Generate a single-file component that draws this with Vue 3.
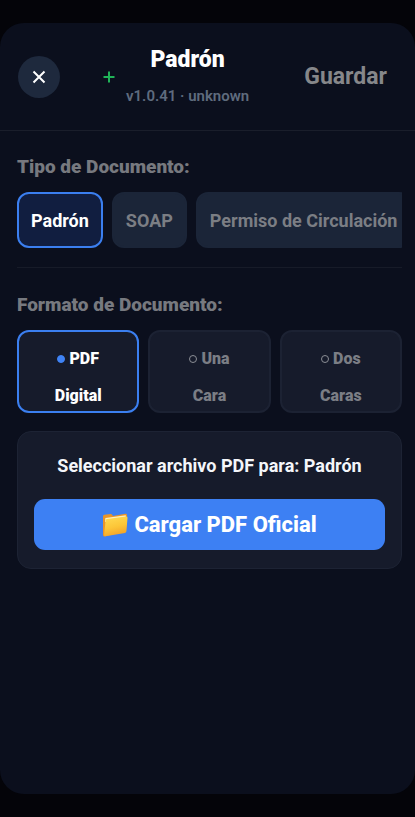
<template>
  <div class="backdrop">
    <main class="sheet">
      <header class="header">
        <button type="button" class="btn-close" aria-label="Cerrar">
          <svg viewBox="0 0 14 14" width="14" height="14" aria-hidden="true">
            <path d="M1.5 1.5L12.5 12.5M12.5 1.5L1.5 12.5" />
          </svg>
        </button>
        <div class="heading">
          <button type="button" class="btn-add" aria-label="Agregar">
            <svg viewBox="0 0 12 12" width="12" height="12" aria-hidden="true">
              <path d="M6 0.5V11.5M0.5 6H11.5" />
            </svg>
          </button>
          <div class="heading-text">
            <h1>{{ selectedType }}</h1>
            <p>v1.0.41 · unknown</p>
          </div>
        </div>
        <button type="button" class="btn-save">Guardar</button>
      </header>

      <section class="section types">
        <h2>Tipo de Documento:</h2>
        <div class="type-list">
          <button
            v-for="type in types"
            :key="type"
            type="button"
            class="type-item"
            :class="{ active: type === selectedType }"
            @click="selectedType = type"
          >
            {{ type }}
          </button>
        </div>
      </section>

      <section class="section">
        <h2 id="format-title">Formato de Documento:</h2>
        <div class="format-list" role="radiogroup" aria-labelledby="format-title">
          <label
            v-for="format in formats"
            :key="format.id"
            :for="'format-' + format.id"
            class="format-item"
            :class="{ active: format.id === selectedFormat }"
          >
            <span class="format-line">
              <input
                type="radio"
                :id="'format-' + format.id"
                name="format"
                :value="format.id"
                v-model="selectedFormat"
              />
              {{ format.first }}
            </span>
            <span class="format-line">{{ format.second }}</span>
          </label>
        </div>

        <div class="upload">
          <p>Seleccionar archivo PDF para: {{ selectedType }}</p>
          <button type="button" class="btn-upload">
            <svg viewBox="0 0 26 24" width="26" height="24" aria-hidden="true">
              <defs>
                <linearGradient id="folder-front" x1="0" y1="0" x2="0.3" y2="1">
                  <stop offset="0" stop-color="#ffdc55" />
                  <stop offset="0.6" stop-color="#fcc638" />
                  <stop offset="1" stop-color="#f4a62a" />
                </linearGradient>
              </defs>
              <path
                d="M1 3.2Q1 1.8 2.4 1.7L8.6 1Q9.6 0.9 10.1 1.7L11 3L23.4 0.8Q25 0.6 25 2.2L24 18L2.6 23.4Q1 23.6 1 22Z"
                fill="#e9952b"
              />
              <path d="M3.4 5L23.8 2.2V7L3 9Z" fill="#fff0bd" />
              <path
                d="M3.6 7.4Q3.7 6.2 5 6L24 3.6Q25.7 3.4 25.5 5L24.4 18.2Q24.3 19.6 23 19.9L3.4 23.2Q1.9 23.4 2.1 21.8Z"
                fill="url(#folder-front)"
              />
            </svg>
            <span>Cargar PDF Oficial</span>
          </button>
        </div>
      </section>
    </main>
  </div>
</template>

<script setup>
import { ref } from "vue";

const types = ["Padrón", "SOAP", "Permiso de Circulación"];
const selectedType = ref("Padrón");

const formats = [
  { id: "digital", first: "PDF", second: "Digital" },
  { id: "single", first: "Una", second: "Cara" },
  { id: "double", first: "Dos", second: "Caras" },
];
const selectedFormat = ref("digital");
</script>

<style>
body {
  background-color: #040409;
}
</style>

<style scoped>
.backdrop {
  box-sizing: border-box;
  min-height: 100vh;
  padding: 23px 0;
  display: flex;
  background-color: #040409;
  color: #fff;
  font-family: Roboto, "Liberation Sans", sans-serif;
}

.sheet {
  flex: 1;
  min-width: 0;
  border-radius: 24px;
  background-color: #0b0f1d;
}

button {
  padding: 0;
  border: none;
  background: none;
  color: inherit;
  font-family: inherit;
  font-weight: 700;
  cursor: pointer;
}

h1,
h2,
p {
  margin: 0;
}

svg {
  display: block;
  flex-shrink: 0;
}

.header {
  display: flex;
  align-items: center;
  justify-content: space-between;
  height: 107px;
  padding: 0 16px 0 18px;
  border-bottom: 1px solid #1a1e2b;
}

.btn-close {
  display: flex;
  align-items: center;
  justify-content: center;
  width: 42px;
  height: 42px;
  border-radius: 50%;
  background-color: #1e293d;
}

.btn-close path {
  fill: none;
  stroke: #fff;
  stroke-width: 2;
}

.heading {
  display: flex;
  align-items: center;
  gap: 11px;
}

.btn-add path {
  fill: none;
  stroke: #20b358;
  stroke-width: 2;
}

.heading-text {
  padding-bottom: 4px;
  text-align: center;
}

.heading-text h1 {
  font-size: 23px;
  line-height: 32px;
  font-weight: 900;
  margin-bottom: 10px;
}

.heading-text p {
  color: #5f6b7e;
  font-size: 15px;
  line-height: 20px;
  font-weight: 600;
}

.btn-save {
  padding: 0 12px;
  color: #86878a;
  font-size: 23px;
  line-height: 32px;
}

.section {
  margin: 0 13px 0 17px;
  padding-top: 22px;
}

.section h2 {
  color: #77797f;
  font-size: 19px;
  line-height: 28px;
  font-weight: 900;
  margin-bottom: 11px;
}

.types {
  padding-bottom: 19px;
  border-bottom: 1px solid #171b28;
}

.types + .section {
  padding-top: 23px;
}

.type-list {
  display: flex;
  gap: 9px;
  overflow: hidden;
}

.type-item {
  box-sizing: border-box;
  flex-shrink: 0;
  height: 56px;
  padding: 0 12px;
  border: 2px solid #1b2538;
  border-radius: 12px;
  background-color: #1b2538;
  color: #7b7e84;
  font-size: 18px;
  white-space: nowrap;
}

.type-item.active {
  border-color: #3b7ff0;
  background-color: #111e40;
  color: #fff;
}

.format-list {
  display: grid;
  grid-template-columns: repeat(3, 1fr);
  gap: 9px;
}

.format-item {
  box-sizing: border-box;
  display: flex;
  flex-direction: column;
  align-items: center;
  height: 83px;
  padding: 8px 0 0;
  border: 2px solid #1c2233;
  border-radius: 12px;
  background-color: #161b2b;
  color: #7b7e85;
  font-size: 16px;
  line-height: 37px;
  font-weight: 900;
  cursor: pointer;
}

.format-item.active {
  border-color: #3b7ff0;
  color: #fff;
}

.format-line {
  display: flex;
  align-items: center;
  gap: 4px;
}

.format-item input {
  appearance: none;
  box-sizing: border-box;
  width: 8px;
  height: 8px;
  margin: 0;
  border: 1px solid #8b8e95;
  border-radius: 50%;
}

.format-item input:checked {
  border-color: #3f83f5;
  background-color: #3f83f5;
}

.upload {
  margin-top: 18px;
  padding: 20px 16px 18px;
  border: 1px solid #1d2334;
  border-radius: 14px;
  background-color: #161b2b;
}

.upload p {
  font-size: 18px;
  line-height: 28px;
  font-weight: 700;
  text-align: center;
  color: #f4f6fa;
  margin-bottom: 19px;
}

.btn-upload {
  display: flex;
  align-items: center;
  justify-content: center;
  gap: 6px;
  width: 100%;
  height: 51px;
  border-radius: 11px;
  background-color: #3d80f3;
  font-size: 22px;
  font-weight: 800;
}
</style>
